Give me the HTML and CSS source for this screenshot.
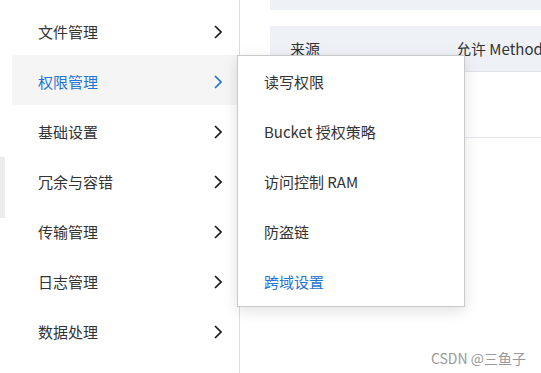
FILE: index.html
```html
<!DOCTYPE html>
<html lang="zh-CN">
<head>
  <meta charset="UTF-8">
  <title>权限管理</title>
  <link rel="stylesheet" href="styles.css">
</head>
<body>
  <div class="edge"></div>

  <!-- 左侧菜单 -->
  <nav class="sidebar">
    <div class="menu-item">文件管理<svg class="arrow" viewBox="0 0 8 14"><polyline points="1,1 7,7 1,13"/></svg></div>
    <div class="menu-item active">权限管理<svg class="arrow" viewBox="0 0 8 14"><polyline points="1,1 7,7 1,13"/></svg></div>
    <div class="menu-item">基础设置<svg class="arrow" viewBox="0 0 8 14"><polyline points="1,1 7,7 1,13"/></svg></div>
    <div class="menu-item">冗余与容错<svg class="arrow" viewBox="0 0 8 14"><polyline points="1,1 7,7 1,13"/></svg></div>
    <div class="menu-item">传输管理<svg class="arrow" viewBox="0 0 8 14"><polyline points="1,1 7,7 1,13"/></svg></div>
    <div class="menu-item">日志管理<svg class="arrow" viewBox="0 0 8 14"><polyline points="1,1 7,7 1,13"/></svg></div>
    <div class="menu-item">数据处理<svg class="arrow" viewBox="0 0 8 14"><polyline points="1,1 7,7 1,13"/></svg></div>
  </nav>

  <!-- 右侧内容 -->
  <main class="content">
    <div class="top-bar"></div>
    <div class="table-head">
      <span class="col-src">来源</span>
      <span class="col-method">允许 Method</span>
    </div>
    <div class="table-row"></div>
  </main>

  <!-- 弹出子菜单 -->
  <div class="submenu">
    <div class="sub-item">读写权限</div>
    <div class="sub-item">Bucket 授权策略</div>
    <div class="sub-item">访问控制 RAM</div>
    <div class="sub-item">防盗链</div>
    <div class="sub-item current">跨域设置</div>
  </div>

  <div class="watermark">CSDN @三鱼子</div>
</body>
</html>
```

FILE: styles.css
```css
body {
  margin: 0;
  width: 541px;
  height: 373px;
  overflow: hidden;
  display: flex;
  background: #fff;
  color: #333;
  font-family: "Noto Sans CJK SC", "Noto Sans", sans-serif;
  font-size: 15px;
  position: relative;
}

.edge {
  position: absolute;
  left: 0;
  top: 157px;
  width: 5px;
  height: 61px;
  background: #ececec;
}

/* ===== 左侧菜单 ===== */
.sidebar {
  width: 240px;
  flex-shrink: 0;
  border-right: 1px solid #dcdcdc;
  padding: 5px 0 0 12px;
  box-sizing: border-box;
}

.menu-item {
  height: 50px;
  box-sizing: border-box;
  padding: 3px 17px 0 26px;
  display: flex;
  align-items: center;
  justify-content: space-between;
}

.menu-item.active {
  background: #f5f5f5;
  color: #1f74d4;
}

.arrow {
  width: 8px;
  height: 14px;
  fill: none;
  stroke: #1a1a1a;
  stroke-width: 1.7;
}

.active .arrow {
  stroke: #1f74d4;
}

/* ===== 右侧内容 ===== */
.content {
  flex: 1;
  padding-left: 30px;
}

.top-bar {
  height: 10px;
  background: #eef1f6;
}

.table-head {
  margin-top: 16px;
  height: 45px;
  background: #eef1f6;
  border-bottom: 1px solid #dfe2e8;
  display: flex;
  align-items: center;
  padding-left: 20px;
}

.col-src {
  width: 166px;
}

.col-method {
  white-space: nowrap;
}

.table-row {
  height: 65px;
  border-bottom: 1px solid #e4e6eb;
}

/* ===== 子菜单 ===== */
.submenu {
  position: absolute;
  left: 237px;
  top: 55px;
  width: 226px;
  background: #fff;
  border: 1px solid #c9c9c9;
  box-shadow: 0 4px 14px rgba(0, 0, 0, 0.12);
}

.sub-item {
  height: 50px;
  display: flex;
  align-items: center;
  padding-left: 26px;
}

.sub-item.current {
  color: #1f74d4;
}

.watermark {
  position: absolute;
  right: 15px;
  bottom: 5px;
  font-size: 14px;
  color: #999;
}
```
